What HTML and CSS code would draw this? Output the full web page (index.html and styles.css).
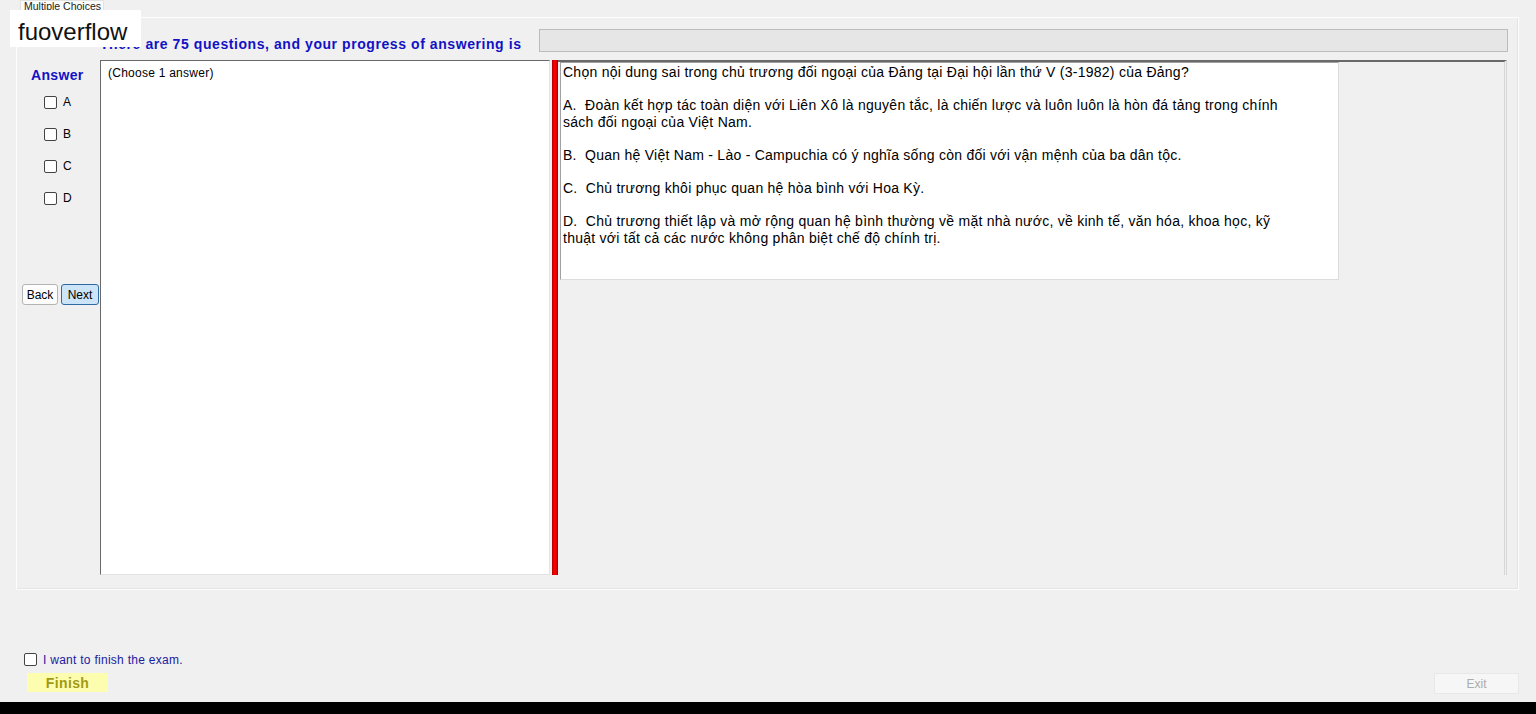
FILE: index.html
```html
<!DOCTYPE html>
<html lang="vi">
<head>
    <meta charset="UTF-8">
    <meta name="viewport" content="width=device-width, initial-scale=1.0">
    <title>Multiple Choices</title>
    <link rel="stylesheet" href="styles.css">
</head>
<body>
    <div class="watermark">fuoverflow</div>

    <div class="tabs">
        <span class="tab">Multiple Choices</span>
    </div>

    <div class="page">
        <div class="head">
            <h1 class="progress-label">There are 75 questions, and your progress of answering is</h1>
            <div class="progress"><div class="progress-fill" style="width: 0%;"></div></div>
        </div>

        <div class="work">
            <div class="side">
                <div class="side-title">Answer</div>
                <ul class="options">
                    <li><input type="checkbox" class="check" id="optA"><label for="optA">A</label></li>
                    <li><input type="checkbox" class="check" id="optB"><label for="optB">B</label></li>
                    <li><input type="checkbox" class="check" id="optC"><label for="optC">C</label></li>
                    <li><input type="checkbox" class="check" id="optD"><label for="optD">D</label></li>
                </ul>
                <div class="nav">
                    <button class="btn">Back</button>
                    <button class="btn btn-active">Next</button>
                </div>
            </div>

            <div class="answer-box">(Choose 1 answer)</div>

            <div class="splitter"></div>

            <div class="pane">
                <div class="question">
                    <p>Chọn nội dung sai trong chủ trương đối ngoại của Đảng tại Đại hội lần thứ V (3-1982) của Đảng?</p>
                    <p>A.&nbsp; Đoàn kết hợp tác toàn diện với Liên Xô là nguyên tắc, là chiến lược và luôn luôn là hòn đá tảng trong chính<br>sách đối ngoại của Việt Nam.</p>
                    <p>B.&nbsp; Quan hệ Việt Nam - Lào - Campuchia có ý nghĩa sống còn đối với vận mệnh của ba dân tộc.</p>
                    <p>C.&nbsp; Chủ trương khôi phục quan hệ hòa bình với Hoa Kỳ.</p>
                    <p>D.&nbsp; Chủ trương thiết lập và mở rộng quan hệ bình thường về mặt nhà nước, về kinh tế, văn hóa, khoa học, kỹ<br>thuật với tất cả các nước không phân biệt chế độ chính trị.</p>
                </div>
            </div>
        </div>
    </div>

    <div class="footer">
        <div class="confirm">
            <input type="checkbox" class="check" id="finishCheck">
            <label for="finishCheck">I want to finish the exam.</label>
        </div>
        <div class="actions">
            <button class="finish">Finish</button>
            <button class="exit" disabled>Exit</button>
        </div>
    </div>

    <div class="taskbar"></div>
</body>
</html>
```

FILE: styles.css
```css
html, body {
    margin: 0;
    padding: 0;
}
body {
    font-family: 'Liberation Sans', Arial, sans-serif;
    background-color: #f0f0f0;
    width: 1536px;
    height: 714px;
    overflow: hidden;
    display: flex;
    flex-direction: column;
    position: relative;
    color: #000;
    letter-spacing: 0.25px;
}
.watermark {
    position: absolute;
    left: 10px;
    top: 10px;
    width: 131px;
    height: 37px;
    box-sizing: border-box;
    padding: 6px 0 0 8px;
    background: #fff;
    font-size: 24px;
    line-height: 31px;
    letter-spacing: 0;
    color: #111;
    z-index: 10;
}
.tabs {
    height: 17px;
    padding-left: 20px;
    display: flex;
}
.tab {
    width: 84px;
    box-sizing: border-box;
    background: #fbfbfb;
    border: 1px solid #e2e2e2;
    border-bottom: none;
    padding: 0 3px;
    font-size: 10.5px;
    line-height: 11px;
    letter-spacing: 0;
    color: #222;
    overflow: hidden;
    white-space: nowrap;
}
.page {
    margin-left: 16px;
    width: 1503px;
    height: 573px;
    box-sizing: border-box;
    border: 1px solid #fdfdfd;
    box-shadow: inset -1px -1px 0 #e4e4e4;
    padding: 11px 10px 0 0;
}
.head {
    display: flex;
    height: 23px;
}
.progress-label {
    flex: 1;
    margin: 0;
    padding: 7px 0 0 83px;
    font-size: 14px;
    line-height: 16px;
    font-weight: bold;
    letter-spacing: 0.57px;
    color: #1212c4;
    white-space: nowrap;
}
.progress {
    width: 969px;
    box-sizing: border-box;
    border: 1px solid #bcbcbc;
    background: #e6e6e6;
}
.progress-fill {
    height: 100%;
    background: #06b025;
}
.work {
    display: flex;
    margin-top: 8px;
    height: 515px;
}
.side {
    width: 83px;
}
.side-title {
    padding: 7px 0 0 14px;
    font-size: 14px;
    line-height: 16px;
    font-weight: bold;
    letter-spacing: 0.35px;
    color: #1212c4;
}
.options {
    list-style: none;
    margin: 3px 0 0;
    padding: 0 0 0 27px;
}
.options li {
    height: 32px;
    display: flex;
    align-items: center;
    gap: 6px;
    font-size: 12px;
}
.check {
    appearance: none;
    -webkit-appearance: none;
    margin: 0;
    width: 13px;
    height: 13px;
    box-sizing: border-box;
    border: 1px solid #444;
    border-radius: 2px;
    background: #fff;
}
.nav {
    margin-top: 70px;
    display: flex;
    gap: 3px;
    padding-left: 5px;
}
.btn {
    width: 36px;
    height: 21px;
    padding: 0;
    font-family: 'Liberation Sans', Arial, sans-serif;
    font-size: 12px;
    color: #000;
    background: #fdfdfd;
    border: 1px solid #b4b4b4;
    border-radius: 3px;
}
.btn-active {
    width: 38px;
    background: #cce4f7;
    border-color: #2f6aa5;
}
.answer-box {
    width: 450px;
    box-sizing: border-box;
    background: #fff;
    border-top: 1px solid #6a6a6a;
    border-left: 1px solid #6a6a6a;
    border-right: 1px solid #e3e3e3;
    border-bottom: 1px solid #e3e3e3;
    padding: 5px 7px;
    font-size: 12px;
    line-height: 14px;
}
.splitter {
    width: 6px;
    margin-left: 2px;
    background: linear-gradient(to right, #9c0000 0, #e00000 1px, #ff0000 3px, #d40000 5px, #900000 6px);
}
.pane {
    width: 949px;
    box-sizing: border-box;
    border-top: 2px solid #696969;
    border-right: 3px double #d6d6d6;
    padding-left: 2px;
}
.question {
    width: 779px;
    height: 218px;
    box-sizing: border-box;
    background: #fff;
    border: 1px solid;
    border-color: #a0a0a0 #dcdcdc #dcdcdc #a0a0a0;
    padding: 1px 0 0 2px;
    font-size: 14px;
    line-height: 16.6px;
    letter-spacing: 0.26px;
    white-space: nowrap;
}
.question p {
    margin: 0 0 16.6px;
}
.footer {
    margin-top: 63px;
}
.confirm {
    display: flex;
    align-items: center;
    gap: 6px;
    padding-left: 24px;
    height: 13px;
}
.confirm label {
    font-size: 12px;
    color: #2020a0;
    letter-spacing: 0.27px;
}
.actions {
    display: flex;
    justify-content: space-between;
    align-items: flex-start;
    margin-top: 7px;
    padding: 0 17px 0 27px;
}
.finish {
    width: 81px;
    height: 19px;
    padding: 0;
    border: none;
    background: #fdfdb0;
    font-family: 'Liberation Sans', Arial, sans-serif;
    font-size: 14px;
    font-weight: bold;
    letter-spacing: 0.4px;
    color: #a29a10;
}
.exit {
    width: 85px;
    height: 21px;
    padding: 0;
    border: 1px solid #e8e8e8;
    background: #f6f6f6;
    font-family: 'Liberation Sans', Arial, sans-serif;
    font-size: 12px;
    color: #acacac;
}
.taskbar {
    margin-top: auto;
    height: 12px;
    background: #000;
}
```
